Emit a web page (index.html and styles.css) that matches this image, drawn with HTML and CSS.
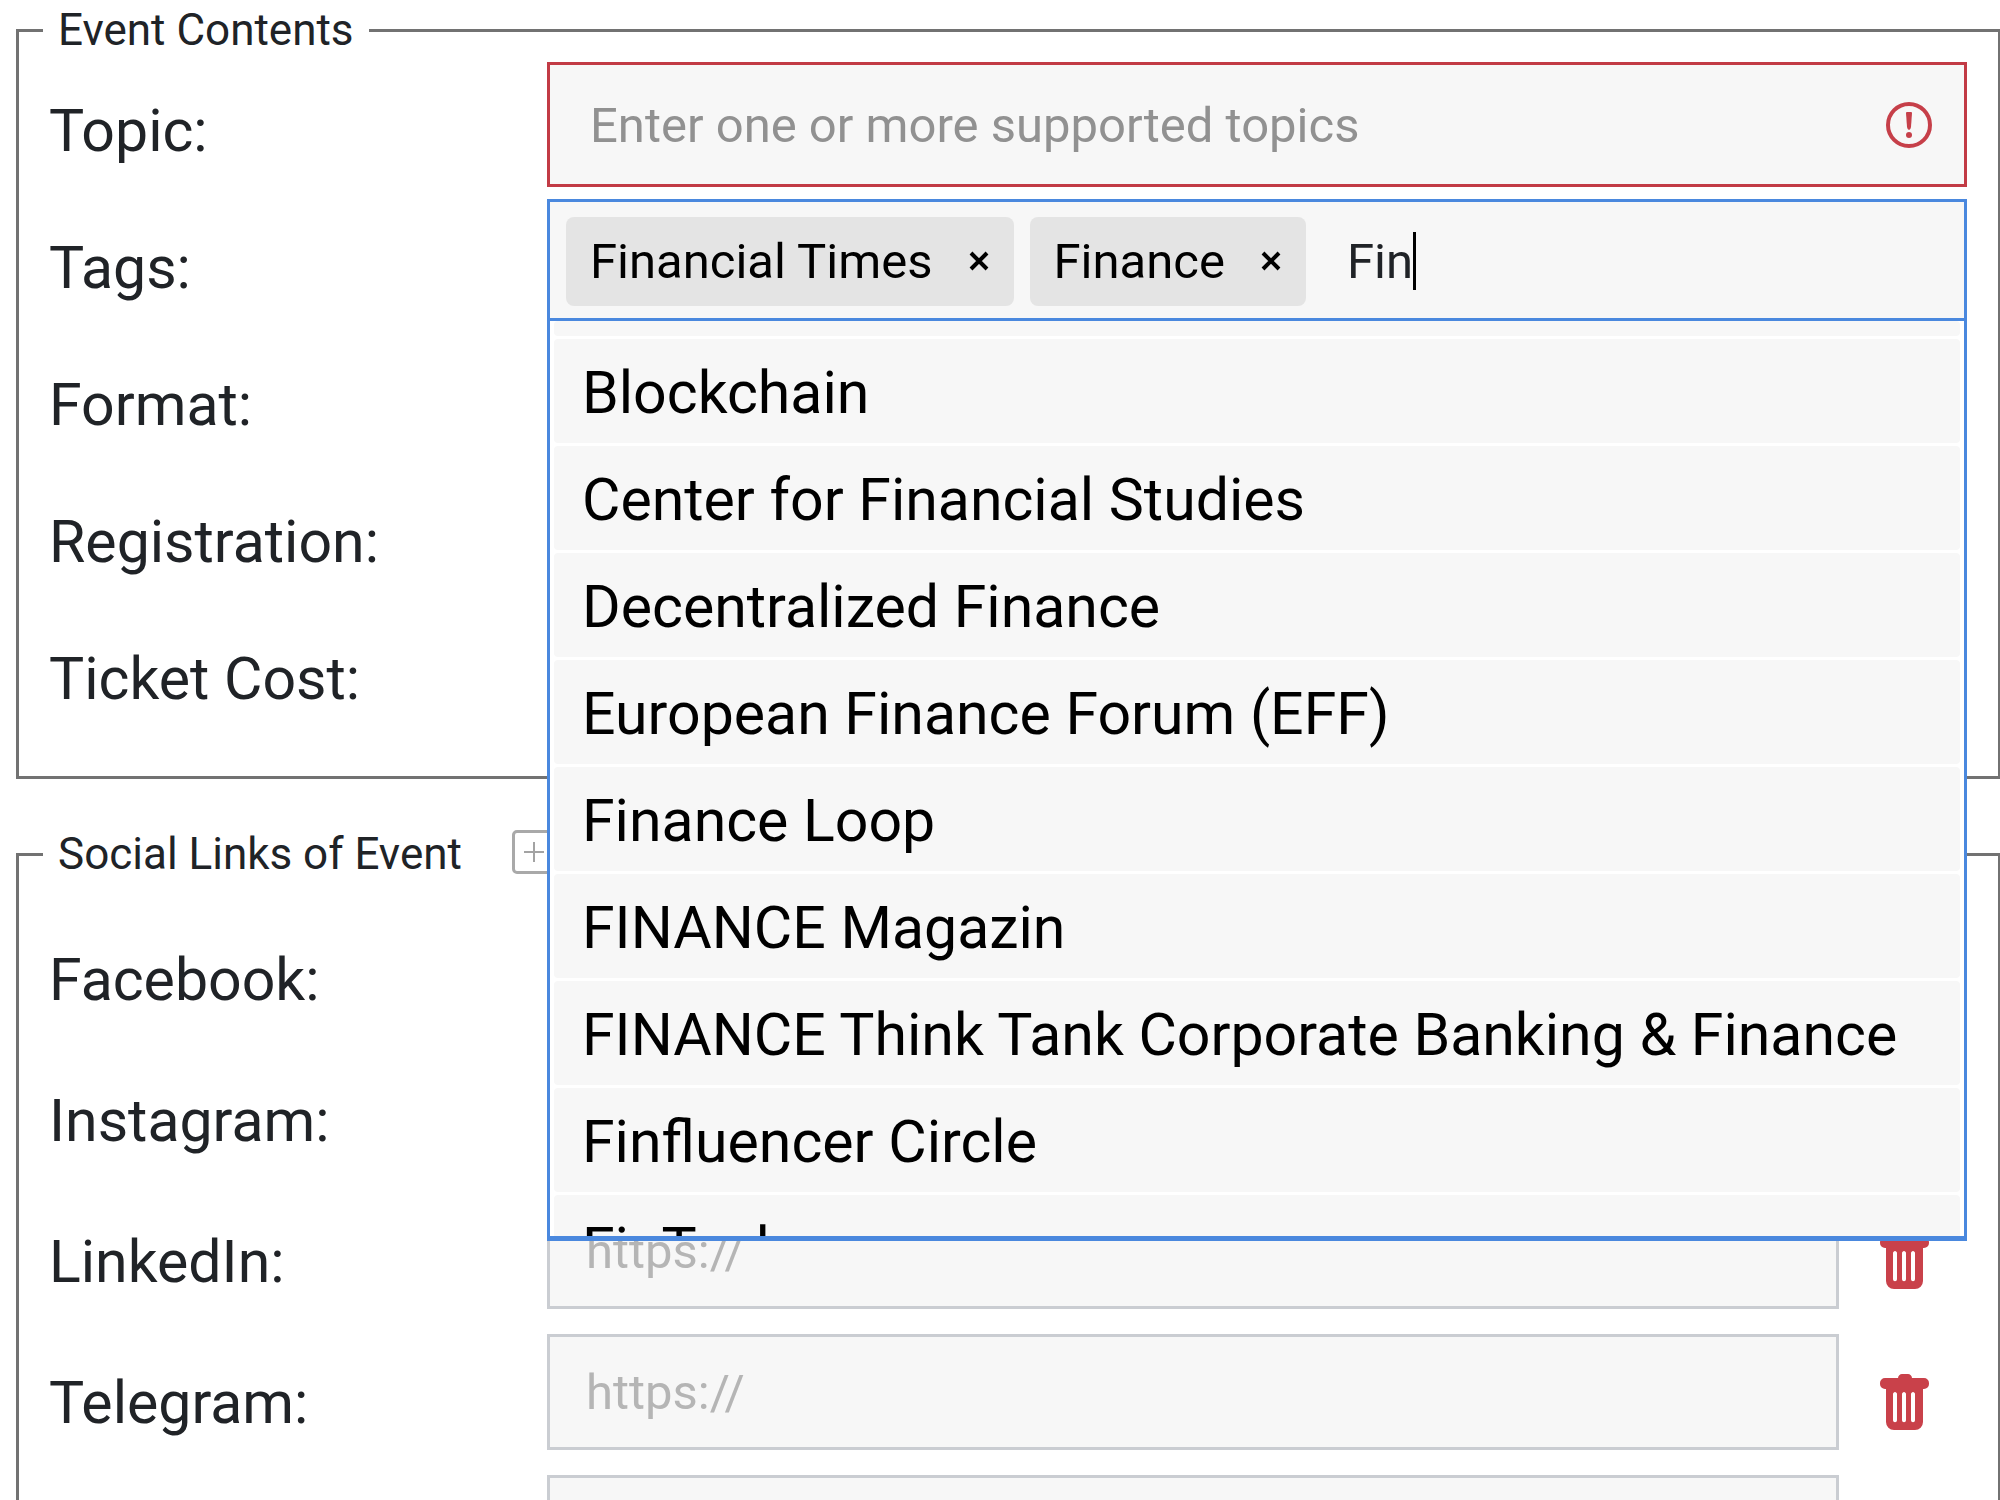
FILE: index.html
```html
<!DOCTYPE html>
<html lang="en">

<head>
    <meta charset="UTF-8">
    <meta name="viewport" content="width=device-width, initial-scale=1.0">
    <link rel="stylesheet" href="styles.css">
    <title>Event</title>
</head>

<body>
    <svg class="sprite" aria-hidden="true">
        <symbol id="trash" viewBox="0 0 49 56">
            <path fill-rule="evenodd" d="M22 0h6c2 0 4 2 4 4h12a5 5 0 0 1 5 5v1a5 5 0 0 1-5 5h-1v33a8 8 0 0 1-8 8H14a8 8 0 0 1-8-8V15H5a5 5 0 0 1-5-5V9a5 5 0 0 1 5-5h13c0-2 2-4 4-4zM15 18c-1 0-2 1-2 2v26c0 3 4 3 4 0V20c0-1-1-2-2-2zM24 18c-1 0-2 1-2 2v26c0 3 4 3 4 0V20c0-1-1-2-2-2zM33 18c-1 0-2 1-2 2v26c0 3 4 3 4 0V20c0-1-1-2-2-2z"/>
        </symbol>
    </svg>

    <form>
        <fieldset class="contents">
            <legend>Event Contents</legend>
            <div class="row">
                <label for="topic">Topic:</label>
                <div class="field field-error">
                    <input type="text" id="topic" placeholder="Enter one or more supported topics">
                    <svg class="icon-error" viewBox="0 0 46 46" aria-hidden="true">
                        <circle cx="23" cy="23" r="21"/>
                        <path d="M20 11q0-1 1-1h4q1 0 1 1l-1 14q-.5 3-2 3t-2-3z"/>
                        <circle class="dot" cx="23" cy="33" r="3"/>
                    </svg>
                </div>
            </div>
            <div class="row">
                <label for="tags">Tags:</label>
                <div class="tags">
                    <div class="field field-active">
                        <span class="chip">Financial Times
                            <button type="button" aria-label="Remove"><svg viewBox="0 0 20 20"><path d="M2 2l16 16M18 2L2 18"/></svg></button>
                        </span>
                        <span class="chip">Finance
                            <button type="button" aria-label="Remove"><svg viewBox="0 0 20 20"><path d="M2 2l16 16M18 2L2 18"/></svg></button>
                        </span>
                        <input type="text" id="tags" value="Fin">
                        <span class="caret"></span>
                    </div>
                    <ul class="menu">
                        <li class="menu-edge"></li>
                        <li>Blockchain</li>
                        <li>Center for Financial Studies</li>
                        <li>Decentralized Finance</li>
                        <li>European Finance Forum (EFF)</li>
                        <li>Finance Loop</li>
                        <li>FINANCE Magazin</li>
                        <li>FINANCE Think Tank Corporate Banking &amp; Finance</li>
                        <li>Finfluencer Circle</li>
                        <li>FinTech</li>
                    </ul>
                </div>
            </div>
            <div class="row">
                <label for="format">Format:</label>
                <input type="text" id="format">
            </div>
            <div class="row">
                <label for="registration">Registration:</label>
                <input type="text" id="registration">
            </div>
            <div class="row">
                <label for="cost">Ticket Cost:</label>
                <input type="text" id="cost">
            </div>
        </fieldset>

        <fieldset class="social">
            <legend>
                Social Links of Event
                <button type="button" class="add" aria-label="Add"><svg viewBox="0 0 22 22"><path d="M11 1v20M1 11h20"/></svg></button>
            </legend>
            <div class="row">
                <label for="facebook">Facebook:</label>
                <div class="link">
                    <input type="url" id="facebook">
                </div>
            </div>
            <div class="row">
                <label for="instagram">Instagram:</label>
                <div class="link">
                    <input type="url" id="instagram">
                </div>
            </div>
            <div class="row">
                <label for="linkedin">LinkedIn:</label>
                <div class="link">
                    <input type="url" id="linkedin" placeholder="https://">
                    <button type="button" class="delete" aria-label="Delete"><svg><use href="#trash"/></svg></button>
                </div>
            </div>
            <div class="row">
                <label for="telegram">Telegram:</label>
                <div class="link">
                    <input type="url" id="telegram" placeholder="https://">
                    <button type="button" class="delete" aria-label="Delete"><svg><use href="#trash"/></svg></button>
                </div>
            </div>
            <div class="row">
                <span></span>
                <div class="link">
                    <input type="url" aria-label="Link">
                </div>
            </div>
        </fieldset>
    </form>
</body>

</html>
```

FILE: styles.css
```css
* {
    box-sizing: border-box;
}

body {
    margin: 0;
    height: 100vh;
    overflow: hidden;
    background-color: #fff;
    color: #202327;
    font-family: Roboto, "Liberation Sans", sans-serif;
    font-size: 59px;
}

input,
button {
    font: inherit;
    color: inherit;
}

button {
    margin: 0;
    padding: 0;
    border: none;
    background: none;
    cursor: pointer;
}

input {
    min-width: 0;
    border: 3px solid #cacdd2;
    border-radius: 0;
    background-color: #f7f7f7;
    font-size: 49px;
    outline: none;
}

svg {
    display: block;
}

.sprite {
    position: absolute;
    width: 0;
    height: 0;
}

/* Sections */
fieldset {
    min-width: 0;
    margin: 0 -1px 45px 16px;
    padding: 2px 31px 41px 24px;
    border: 3px solid #727272;
}

legend {
    display: flex;
    align-items: center;
    padding: 0 15px;
    font-size: 44px;
    line-height: 60px;
}

.row {
    display: grid;
    grid-template-columns: 504px 1fr;
    height: 125px;
    margin-bottom: 12px;
}

.row:last-child {
    margin-bottom: 0;
}

.row label {
    display: flex;
    align-items: center;
    padding: 12px 0 0 6px;
}

.social {
    padding-top: 27px;
}

.social .row {
    height: 116px;
    margin-bottom: 25px;
}

.social .row label {
    padding-top: 20px;
}

/* Fields */
.field {
    display: flex;
    align-items: center;
    height: 100%;
    border: 3px solid;
    background-color: #f7f7f7;
}

.field input {
    border: none;
    padding: 0;
    background: none;
}

.field-error {
    padding: 1px 32px 0 40px;
    border-color: #c23b45;
}

.field-error input {
    flex: 1;
}

.field-error input::placeholder {
    color: #919191;
}

.icon-error {
    width: 46px;
    height: 46px;
    fill: #c63f49;
}

.icon-error circle {
    fill: none;
    stroke: #c63f49;
    stroke-width: 4;
}

.icon-error .dot {
    fill: #c63f49;
    stroke: none;
}

/* Tags */
.tags {
    position: relative;
    height: 122px;
}

.field-active {
    gap: 16px;
    padding: 2px 16px 0;
    border-color: #4a88de;
}

.chip {
    display: flex;
    align-items: center;
    gap: 36px;
    height: 89px;
    padding: 0 25px 0 24px;
    border-radius: 8px;
    background-color: #e4e4e4;
    color: #000;
    font-size: 49px;
}

.chip svg {
    width: 20px;
    height: 20px;
    stroke: #000;
    stroke-width: 4;
}

.field-active input {
    width: 66px;
    margin-left: 25px;
}

.caret {
    width: 3px;
    height: 58px;
    margin-left: -16px;
    background-color: #000;
}

.menu {
    position: absolute;
    z-index: 1;
    top: 100%;
    left: 0;
    right: 0;
    height: 920px;
    margin: 0;
    padding: 0 4px;
    overflow: hidden;
    border: solid #4a88de;
    border-width: 0 3px 5px;
    background-color: #fff;
    color: #000;
    list-style: none;
}

.menu li {
    height: 104px;
    margin-bottom: 3px;
    padding-left: 28px;
    border-radius: 4px;
    background-color: #f7f7f7;
    line-height: 108px;
    white-space: nowrap;
}

.menu .menu-edge {
    height: 15px;
}

/* Social links */
.add {
    display: flex;
    align-items: center;
    justify-content: center;
    width: 44px;
    height: 44px;
    margin: 0 0 4px 50px;
    border: 3px solid #a9a9a9;
    border-radius: 5px;
}

.add svg {
    width: 22px;
    height: 22px;
    stroke: #a3a3a3;
    stroke-width: 2;
}

.link {
    display: grid;
    grid-template-columns: 1fr 128px;
}

.link input {
    padding: 0 36px;
}

.link input::placeholder {
    color: #b5b5b5;
}

.delete {
    display: flex;
    align-items: center;
    justify-content: center;
    padding: 20px 0 0 2px;
}

.delete svg {
    width: 49px;
    height: 56px;
    fill: #c9414a;
}
```
